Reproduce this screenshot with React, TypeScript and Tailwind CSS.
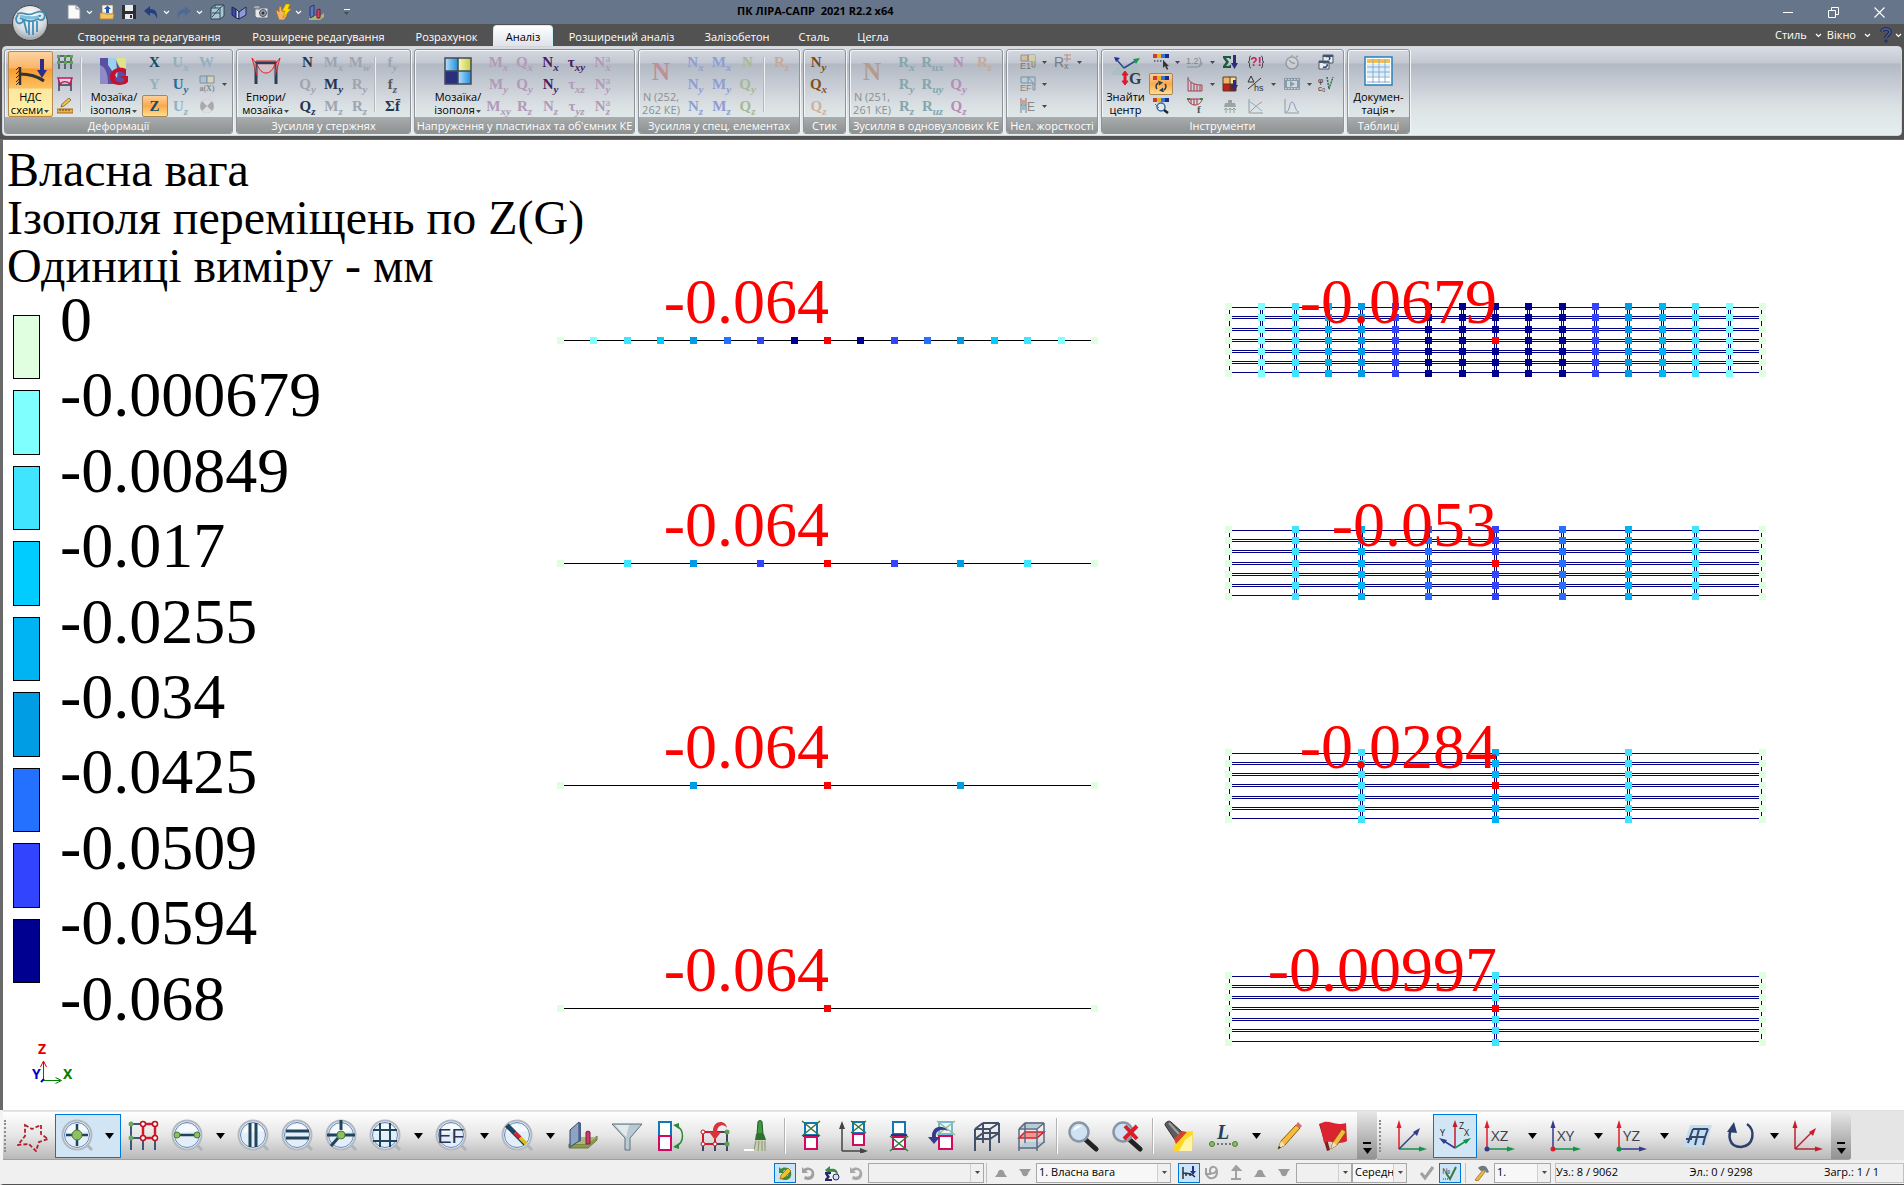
import React from 'react';

type Kids = { children?: React.ReactNode };

/* ---------- shared bits ---------- */

function Caret({ light }: { light?: boolean }) {
  return (
    <svg width="7" height="5" viewBox="0 0 7 5" className="inline-block shrink-0" aria-hidden="true">
      {light ? (
        <path d="M1 1l2.500 2.500L6 1" fill="none" stroke="#fff" strokeWidth="1.200" />
      ) : (
        <path d="M1 1h5L3.500 4z" fill="#4a4a4a" />
      )}
    </svg>
  );
}

function Svg({ size, box, children }: { size: number; box?: string } & Kids) {
  return (
    <svg width={size} height={size} viewBox={box ?? `0 0 ${size} ${size}`} className="shrink-0" aria-hidden="true">
      {children}
    </svg>
  );
}

/* ---------- title bar ---------- */

const quick: { name: string; icon: React.ReactNode; menu?: boolean }[] = [
  {
    name: 'Новий',
    menu: true,
    icon: (
      <Svg size={16}>
        <path d="M2 1h8l4 4v10H2z" fill="#fafafa" stroke="#8a8f98" />
        <path d="M10 1v4h4" fill="#dfe3ea" stroke="#8a8f98" />
      </Svg>
    ),
  },
  {
    name: 'Відкрити',
    icon: (
      <Svg size={16}>
        <path d="M3 1h11v9H3z" fill="#f4f4f4" stroke="#9a7a3a" strokeWidth=".7" />
        <path d="M8.500 1.500l3.500 3.500h-2v4H7V5H5z" fill="#2458a8" />
        <path d="M1 9h5l1 1h8l-1 5H1z" fill="#f3c463" stroke="#b98628" strokeWidth=".8" />
      </Svg>
    ),
  },
  {
    name: 'Зберегти',
    icon: (
      <Svg size={16}>
        <path d="M1 1h14v14H1z" fill="#2b2d33" />
        <path d="M4 1h8v6H4zM4 10h8v5H4z" fill="#e9ebef" />
        <path d="M9 11h2v3H9z" fill="#2b2d33" />
      </Svg>
    ),
  },
  {
    name: 'Скасувати',
    menu: true,
    icon: (
      <Svg size={16}>
        <path d="M1 7l6-5v3c5 0 8 3 7 10-1-4-3-6-7-6v3z" fill="#22407e" />
      </Svg>
    ),
  },
  {
    name: 'Повторити',
    menu: true,
    icon: (
      <Svg size={16}>
        <path d="M15 7L9 2v3C4 5 1 8 2 15c1-4 3-6 7-6v3z" fill="#4f6a92" />
      </Svg>
    ),
  },
  {
    name: 'Модель',
    icon: (
      <Svg size={16}>
        <path d="M2 4l4-3h9v11l-4 3H2z" fill="#a9c6d4" stroke="#2f4656" />
        <path d="M2 4h9v11M11 4l4-3M3 13l7-8M3 9h8M6 1v3" fill="none" stroke="#2f4656" />
      </Svg>
    ),
  },
  {
    name: 'Книга звітів',
    icon: (
      <Svg size={16}>
        <path d="M1 3l4 2v9l-4-3z" fill="#3949a8" stroke="#24265c" />
        <path d="M5 5l3 3v7l-3-1z" fill="#cfd6f2" stroke="#24265c" />
        <path d="M15 3L8 8v7l7-4z" fill="#8f9bd8" stroke="#24265c" />
      </Svg>
    ),
  },
  {
    name: 'Знімок',
    icon: (
      <Svg size={16}>
        <path d="M1 2h6v3H1zM2 4h13v10H4L2 12z" fill="#e3e6ea" stroke="#6b6f78" />
        <circle cx="10" cy="9" r="3.500" fill="#9aa1ac" stroke="#4c505a" />
        <circle cx="10" cy="9" r="1.500" fill="#2d3038" />
      </Svg>
    ),
  },
  {
    name: 'Розрахунок',
    menu: true,
    icon: (
      <Svg size={16}>
        <path d="M1 7l2-1 1 2V3l2-1 1 5 5 1v4l-3 4H4z" fill="#f0b46a" stroke="#a76a20" strokeWidth=".8" />
        <path d="M11 0h4l-2 5h3l-8 9 2-7H7z" fill="#ffe000" stroke="#c58a00" strokeWidth=".7" />
      </Svg>
    ),
  },
  {
    name: 'Конструкція',
    icon: (
      <Svg size={16}>
        <path d="M1 12h11l4-3v4l-4 3H1z" fill="#a9b873" />
        <path d="M2 3l4-2v11l-4 2z" fill="#5c79c2" stroke="#26386e" />
        <path d="M9 6l3-1v9H9z" fill="#d8436f" stroke="#7a1638" />
      </Svg>
    ),
  },
];

function TitleBar() {
  return (
    <header className="flex h-6 items-center bg-[#66758a]">
      <div className="flex w-[737px] items-center pl-[63px]">
        {quick.map((q) => (
          <button key={q.name} type="button" aria-label={q.name} className="flex h-6 items-center gap-1 px-[3px]">
            {q.icon}
            {q.menu && <Caret light />}
          </button>
        ))}
        <button type="button" aria-label="Налаштувати панель" className="ml-4 flex flex-col items-center gap-px">
          <span className="h-px w-[6px] bg-white" />
          <Caret />
        </button>
      </div>
      <h1 className="pb-[2px] text-[11px] font-bold whitespace-pre text-black">ПК ЛІРА-САПР  2021 R2.2 x64</h1>
      <div className="flex flex-1 justify-end pr-[2px]">
        <button type="button" aria-label="Згорнути" className="flex h-6 w-[46px] items-center justify-center">
          <span className="h-px w-[10px] bg-white" />
        </button>
        <button type="button" aria-label="Відновити" className="flex h-6 w-[45px] items-center justify-center">
          <Svg size={11}>
            <path d="M.5 3.500h7v7h-7zM3.500 3V.5h7v7H8" fill="none" stroke="#fff" />
          </Svg>
        </button>
        <button type="button" aria-label="Закрити" className="flex h-6 w-[46px] items-center justify-center">
          <Svg size={11}>
            <path d="M.5.5l10 10M10.500.5l-10 10" stroke="#fff" strokeWidth="1.100" />
          </Svg>
        </button>
      </div>
    </header>
  );
}

function Logo() {
  return (
    <button type="button" aria-label="Головне меню" className="absolute top-1 left-[11px] z-10">
      <svg width="38" height="38" viewBox="0 0 38 38" aria-hidden="true">
        <defs>
          <radialGradient id="orb" cx=".5" cy=".3" r=".75">
            <stop offset="0" stopColor="#ffffff" />
            <stop offset=".6" stopColor="#d6dade" />
            <stop offset="1" stopColor="#8b9198" />
          </radialGradient>
        </defs>
        <circle cx="19" cy="19" r="17.500" fill="url(#orb)" stroke="#444" />
        <g fill="none" stroke="#3f8fb6" strokeWidth="1.800">
          <path d="M6 10c6-3 10 2 15 0s9-4 12-1c2 3 0 8-4 7s-2-5 1-4" />
          <path d="M7 11c-4 4-1 10 3 8s1-6-1-4M13 17l3 12M18 16l0 15M22 16l0 15M26 17v11M10 14c5 4 12 4 17 1" />
        </g>
        <path d="M9 11c6 0 10 3 19 0v3c-7 3-12 1-19 0z" fill="#7fc0da" />
      </svg>
    </button>
  );
}

/* ---------- tabs ---------- */

const tabs = [
  { t: 'Створення та редагування', w: 'w-[176px]' },
  { t: 'Розширене редагування', w: 'w-[163px]' },
  { t: 'Розрахунок', w: 'w-[93px]' },
  { t: 'Аналіз', w: 'w-[60px]', on: true },
  { t: 'Розширений аналіз', w: 'w-[137px]' },
  { t: 'Залізобетон', w: 'w-[94px]' },
  { t: 'Сталь', w: 'w-[60px]' },
  { t: 'Цегла', w: 'w-[58px]' },
];

function TabRow() {
  return (
    <div className="flex h-[22px] items-stretch bg-[#525252] pr-[2px] pl-[61px] text-[11px]">
      <nav role="tablist" className="flex items-stretch">
        {tabs.map((t) => (
          <button
            key={t.t}
            type="button"
            role="tab"
            aria-selected={!!t.on}
            className={`${t.w} mt-px whitespace-nowrap pt-[3px] text-center ${
              t.on ? 'rounded-t-[4px] border border-b-0 border-[#c8f4f4] bg-gradient-to-b from-white to-[#dfe2ea] text-black' : 'text-white'
            }`}
          >
            {t.t}
          </button>
        ))}
      </nav>
      <div className="ml-auto flex items-center gap-[5px] text-white">
        <button type="button" className="flex items-center gap-2">
          Стиль <Caret light />
        </button>
        <button type="button" className="flex items-center gap-2">
          Вікно <Caret light />
        </button>
        <button type="button" aria-label="Довідка" className="ml-1 flex items-center gap-[3px]">
          <svg width="12" height="16" viewBox="0 0 12 16" aria-hidden="true">
            <path d="M2 5c0-4 8-4 8 0 0 3-4 3-4 6" fill="none" stroke="#1d2550" strokeWidth="3.500" />
            <path d="M2 5c0-4 8-4 8 0 0 3-4 3-4 6" fill="none" stroke="#4d64a6" strokeWidth="1.500" />
            <circle cx="6" cy="14" r="1.800" fill="#26346e" />
          </svg>
          <Caret light />
        </button>
      </div>
    </div>
  );
}

/* ---------- ribbon ---------- */

function Group({ title, w, children }: { title: string; w: string } & Kids) {
  return (
    <section
      aria-label={title}
      className={`${w} flex shrink-0 flex-col overflow-hidden rounded-[3px] border border-[#8f9498] shadow-[inset_1px_1px_0_#f2f4f6,1px_0_0_#f2f4f6]`}
    >
      <div className="flex h-[68px] items-start pt-px">{children}</div>
      <div className="h-4 bg-gradient-to-b from-[#a9adad] to-[#8d9191] pt-px text-center text-[11px] leading-[15px] whitespace-nowrap text-white">
        {title}
      </div>
    </section>
  );
}

function Big({ icon, a, b, w, menu, off, on }: { icon: React.ReactNode; a: string; b: string; w: string; menu?: boolean; off?: boolean; on?: boolean }) {
  return (
    <button
      type="button"
      disabled={off}
      aria-pressed={on}
      className={`${w} flex h-[66px] shrink-0 flex-col items-center text-[11px] leading-[13px] whitespace-nowrap ${off ? 'text-[#8b8f92]' : 'text-black'} ${
        on ? 'rounded-[2px] border border-[#b98a50] bg-[linear-gradient(#fbd3a0_0,#fbb56a_16px,#f99b2f_17px,#fdc160_36px,#fbe7a0_37px,#fff0a8_60px,#ffd968_64px)]' : 'py-px'
      }`}
    >
      <span className="flex h-[38px] w-full items-center justify-center">{icon}</span>
      <span>
        {a}
        <br />
        {b}
        {menu && <Caret />}
      </span>
    </button>
  );
}

function Col({ w, children }: { w?: string } & Kids) {
  return <div className={`${w ?? 'w-[26px]'} grid shrink-0 grid-rows-[22px_22px_22px]`}>{children}</div>;
}

function Cell({ name, off, on, children }: { name: string; off?: boolean; on?: boolean } & Kids) {
  return (
    <button
      type="button"
      aria-label={name}
      disabled={off}
      className={`flex h-[22px] items-center justify-center ${off ? 'opacity-50' : ''} ${
        on ? 'rounded-[2px] border border-[#a8865a] bg-gradient-to-b from-[#fbd09a] via-[#fba84a] to-[#ffe08a]' : ''
      }`}
    >
      {children}
    </button>
  );
}

function Sym({ t, s, p, c, on }: { t: string; s?: string; p?: string; c: string; on?: boolean }) {
  return (
    <button
      type="button"
      aria-label={`${t}${s ?? ''}${p ?? ''}`}
      className={`${c} relative flex h-[22px] items-center justify-center pr-px font-['Liberation_Serif',serif] text-[15px] leading-[20px] font-bold whitespace-nowrap ${
        on ? 'rounded-[2px] border border-[#a8865a] bg-gradient-to-b from-[#fbd09a] via-[#fba84a] to-[#ffe08a]' : ''
      }`}
    >
      <span>{t}</span>
      {(s || p) && (
        <span className="flex h-[20px] flex-col justify-end text-[11px] leading-[9px]">
          {p && <span className="font-normal">{p}</span>}
          {s && <span className="italic">{s}</span>}
        </span>
      )}
    </button>
  );
}

function Sep() {
  return <div className="mt-[6px] h-[55px] w-px shrink-0 bg-[#eef0f2] shadow-[-1px_0_0_#b4b8bd]" />;
}

function DropCol({ rows, w }: { rows: boolean[]; w?: string }) {
  return (
    <Col w={w ?? 'w-[9px]'}>
      {rows.map((r, i) =>
        r ? (
          <button key={i} type="button" aria-label="Відкрити список" className="flex h-[22px] items-center justify-center">
            <Caret />
          </button>
        ) : (
          <span key={i} />
        ),
      )}
    </Col>
  );
}

function Quad({ size }: { size: number }) {
  return (
    <Svg size={size} box="0 0 28 28">
      <defs>
        <linearGradient id="qa" x2="1">
          <stop offset="0" stopColor="#b8e0fa" />
          <stop offset="1" stopColor="#1c8fdc" />
        </linearGradient>
        <linearGradient id="qb" x2="1">
          <stop offset="0" stopColor="#f8fac0" />
          <stop offset="1" stopColor="#c4cc40" />
        </linearGradient>
      </defs>
      <path d="M1 1h13v13H1z" fill="url(#qa)" />
      <path d="M14 1h13v13H14z" fill="url(#qb)" />
      <path d="M1 14h13v13H1z" fill="#2a2f7c" />
      <path d="M14 14h13v13H14z" fill="url(#qa)" />
      <path d="M1 1h26v26H1zM14 1v26M1 14h26" fill="none" stroke="#444b55" strokeWidth="1.500" />
    </Svg>
  );
}

const rainbow = (
  <g>
    <path d="M0 0h4v4H0z" fill="#c8402a" />
    <path d="M4 0h4v4H4z" fill="#f0b020" />
    <path d="M8 0h4v4H8z" fill="#2a78d8" />
    <path d="M12 0h4v4h-4z" fill="#1c2c88" />
  </g>
);

const T = {
  navy: 'text-[#164a66]',
  teal: 'text-[#93b0bf]',
  dark: 'text-[#27344a]',
  gray: 'text-[#9ea4b0]',
  plum: 'text-[#4a1a62]',
  mauve: 'text-[#b19ab8]',
  blue: 'text-[#8f9dd2]',
  green: 'text-[#a9b894]',
  tan: 'text-[#c6a999]',
  sea: 'text-[#84a6ad]',
  pink: 'text-[#b68dba]',
};

function Ribbon() {
  return (
    <div className="bg-[#525252] px-[2px] pb-[3px]">
      <div className="flex h-[90px] gap-[3px] overflow-hidden rounded-[4px] border border-[#d4d6da] bg-[linear-gradient(#d9dce4_0,#c2c7d1_16px,#b2b9c4_17px,#c9ced6_40px,#dbe2e4_60px,#e6f0f0_88px)] p-px pt-[2px]">
        <Group title="Деформації" w="w-[229px]">
          <div className="w-[3px]" />
          <Big
            w="w-[45px]"
            on
            menu
            a="НДС"
            b="схеми"
            icon={
              <Svg size={32}>
                <path d="M5 12v18" stroke="#333" strokeWidth="2.500" />
                <path d="M5 19c10 0 17 2 24 7" fill="none" stroke="#333" strokeWidth="3" />
                <path d="M4 12l-3 3m3 1l-3 3m3 1l-3 3m3 1l-3 3m3 0l-3 3" stroke="#333" />
                <path d="M25 4h4v11h3l-5 8-5-8h3z" fill="#2c2c8c" />
              </Svg>
            }
          />
          <Col w="w-[24px]">
            <Cell name="Вузли схеми">
              <Svg size={16}>
                <path d="M1 2h14M1 8h14M2 2v13M8 2v13M14 2v13" fill="none" stroke="#34504a" strokeWidth="1.500" />
                <path d="M0 1h3v3H0zM7 1h3v3H7zM13 1h3v3h-3zM0 7h3v3H0zM7 7h3v3H7zM13 7h3v3h-3z" fill="#5aa846" />
              </Svg>
            </Cell>
            <Cell name="Деформована схема">
              <Svg size={16}>
                <path d="M2 2v13M14 2v13M2 9h12" fill="none" stroke="#3a3f55" strokeWidth="1.500" />
                <path d="M1 2h14l-2 6c-3-3-7-3-10 0z" fill="#f4d0de" stroke="#c2185b" strokeWidth="1.500" />
              </Svg>
            </Cell>
            <Cell name="Вимірювання">
              <Svg size={16}>
                <path d="M0 11h16v4H0z" fill="#e8b050" stroke="#a86a18" />
                <path d="M3 11v2m3-2v2m3-2v2m3-2v2" stroke="#6a4410" />
                <path d="M4 9l1-3 7-6 2 2-7 6z" fill="#f6c740" stroke="#7a5a20" strokeWidth=".8" />
              </Svg>
            </Cell>
          </Col>
          <div className="w-1" />
          <Sep />
          <div className="w-1" />
          <Big
            w="w-[56px]"
            menu
            a="Мозаїка/"
            b="ізополя"
            icon={
              <Svg size={30}>
                <path d="M1 2h26v26H1z" fill="#5a4fa0" />
                <path d="M9 2h9c-2 9 2 12 0 20L9 9z" fill="#9ad0f0" />
                <path d="M17 2h10v14c-6-2-9-8-10-14z" fill="#dfe48a" />
                <path d="M1 9c6 2 8 10 8 19H1z" fill="#8f8ac8" />
                <path d="M27 13v5h-2c-2-4-9-3-9 3s7 7 9 4v-3h-3v-2h7v6c-6 5-18 4-18-5s11-11 16-8z" fill="#c8102e" />
              </Svg>
            }
          />
          <Col>
            <Sym t="X" c={T.navy} />
            <Sym t="Y" c={T.teal} />
            <Sym t="Z" c={T.navy} on />
          </Col>
          <Col>
            <Sym t="U" s="x" c={T.teal} />
            <Sym t="U" s="y" c="text-[#1f6f98]" />
            <Sym t="U" s="z" c={T.teal} />
          </Col>
          <Col>
            <Sym t="W" c={T.teal} />
            <Cell name="a(X)" off>
              <Svg size={18}>
                <path d="M2 1h7v7H2z" fill="#88c4e8" stroke="#555" />
                <path d="M9 1h7v7H9z" fill="#e8e4a8" stroke="#555" />
                <text x="9" y="16" textAnchor="middle" fontSize="8" fontWeight="700" fontFamily="Liberation Serif" fill="#444">a(X)</text>
              </Svg>
            </Cell>
            <Cell name="Обертання" off>
              <Svg size={16}>
                <circle cx="8" cy="8" r="7" fill="#777" />
                <path d="M8 8L3 3a7 7 0 0 1 10 0zM8 8l-5 5a7 7 0 0 0 10 0z" fill="#ddd" />
              </Svg>
            </Cell>
          </Col>
          <DropCol rows={[false, true, false]} />
        </Group>

        <Group title="Зусилля у стержнях" w="w-[175px]">
          <Big
            w="w-[58px]"
            menu
            a="Епюри/"
            b="мозаїка"
            icon={
              <Svg size={30}>
                <path d="M5 28V7h20v21" fill="none" stroke="#2c3c54" strokeWidth="3" />
                <path d="M5 7L1 2l5 18M25 7l4-5-5 18M6 8c4 12 14 12 18 0M5 5l20 0" fill="#f3c3c3" fillOpacity=".5" stroke="#d22" />
              </Svg>
            }
          />
          <Col>
            <Sym t="N" c={T.dark} />
            <Sym t="Q" s="y" c={T.gray} />
            <Sym t="Q" s="z" c={T.dark} />
          </Col>
          <Col>
            <Sym t="M" s="x" c={T.gray} />
            <Sym t="M" s="y" c={T.dark} />
            <Sym t="M" s="z" c={T.gray} />
          </Col>
          <Col>
            <Sym t="M" s="w" c={T.gray} />
            <Sym t="R" s="y" c={T.gray} />
            <Sym t="R" s="z" c={T.gray} />
          </Col>
          <div className="w-[2px]" />
          <Sep />
          <div className="w-1" />
          <Col w="w-[26px]">
            <Sym t="f" s="y" c={T.gray} />
            <Sym t="f" s="z" c="text-[#55585f]" />
            <Sym t="Σf̄" c={T.dark} />
          </Col>
        </Group>

        <Group title="Напруження у пластинах та об'ємних КЕ" w="w-[221px]">
          <div className="w-[15px]" />
          <Big w="w-[56px]" menu a="Мозаїка/" b="ізополя" icon={<Quad size={28} />} />
          <Col>
            <Sym t="M" s="x" c={T.mauve} />
            <Sym t="M" s="y" c={T.mauve} />
            <Sym t="M" s="xy" c={T.mauve} />
          </Col>
          <Col>
            <Sym t="Q" s="x" c={T.mauve} />
            <Sym t="Q" s="y" c={T.mauve} />
            <Sym t="R" s="z" c={T.mauve} />
          </Col>
          <Col>
            <Sym t="N" s="x" c={T.plum} />
            <Sym t="N" s="y" c={T.plum} />
            <Sym t="N" s="z" c={T.mauve} />
          </Col>
          <Col>
            <Sym t="τ" s="xy" c={T.plum} />
            <Sym t="τ" s="xz" c={T.mauve} />
            <Sym t="τ" s="yz" c={T.mauve} />
          </Col>
          <Col>
            <Sym t="N" s="x" p="a" c={T.mauve} />
            <Sym t="N" s="y" p="a" c={T.mauve} />
            <Sym t="N" s="z" p="a" c={T.mauve} />
          </Col>
        </Group>

        <Group title="Зусилля у спец. елементах" w="w-[162px]">
          <Big
            w="w-[44px]"
            off
            a="N (252,"
            b="262 КЕ)"
            icon={<span className="font-['Liberation_Serif',serif] text-[25px] font-bold text-[#bf8f96]">N</span>}
          />
          <Col>
            <Sym t="N" s="x" c={T.blue} />
            <Sym t="N" s="y" c={T.blue} />
            <Sym t="N" s="z" c={T.blue} />
          </Col>
          <Col>
            <Sym t="M" s="x" c={T.blue} />
            <Sym t="M" s="y" c={T.blue} />
            <Sym t="M" s="z" c={T.blue} />
          </Col>
          <Col>
            <Sym t="N" c={T.green} />
            <Sym t="Q" s="y" c={T.green} />
            <Sym t="Q" s="z" c={T.green} />
          </Col>
          <div className="w-[3px]" />
          <Sep />
          <div className="w-1" />
          <Col>
            <Sym t="R" s="z" c={T.tan} />
          </Col>
        </Group>

        <Group title="Стик" w="w-[43px]">
          <div className="w-[2px]" />
          <Col>
            <Sym t="N" s="y" c="text-[#7a4a20]" />
            <Sym t="Q" s="x" c="text-[#85501e]" />
            <Sym t="Q" s="z" c="text-[#cfb09c]" />
          </Col>
        </Group>

        <Group title="Зусилля в одновузлових КЕ" w="w-[154px]">
          <Big
            w="w-[44px]"
            off
            a="N (251,"
            b="261 КЕ)"
            icon={<span className="font-['Liberation_Serif',serif] text-[25px] font-bold text-[#b49c8c]">N</span>}
          />
          <Col>
            <Sym t="R" s="x" c={T.sea} />
            <Sym t="R" s="y" c={T.sea} />
            <Sym t="R" s="z" c={T.sea} />
          </Col>
          <Col>
            <Sym t="R" s="ux" c={T.sea} />
            <Sym t="R" s="uy" c={T.sea} />
            <Sym t="R" s="uz" c={T.sea} />
          </Col>
          <Col>
            <Sym t="N" c={T.pink} />
            <Sym t="Q" s="y" c={T.pink} />
            <Sym t="Q" s="z" c={T.pink} />
          </Col>
          <Col>
            <Sym t="R" s="z" c={T.tan} />
          </Col>
        </Group>

        <Group title="Нел. жорсткості" w="w-[92px]">
          <div className="w-[9px]" />
          <Col w="w-[24px]">
            <Cell name="E1" off>
              <Svg size={18}>
                <path d="M2 2h7v6H2zM9 2h7v12h-3V8H9z" fill="#e0b060" stroke="#555" />
                <path d="M10 2h6v6h-6z" fill="#d8d478" />
                <text x="1" y="16" fontSize="9" fontFamily="Liberation Sans" fill="#333">E1</text>
              </Svg>
            </Cell>
            <Cell name="EF" off>
              <Svg size={18}>
                <path d="M2 2h14v13h-2V8H2zM9 2v6M9 2l7 8" fill="#a8d4ec" stroke="#456" />
                <text x="1" y="16" fontSize="9" fontFamily="Liberation Sans" fill="#333">EF</text>
              </Svg>
            </Cell>
            <Cell name="HE" off>
              <Svg size={18}>
                <path d="M2 1v15M7 1v15M2 8h5" stroke="#222" />
                <path d="M2 3h5v4H2z" fill="#e05a30" />
                <path d="M2 9h5v4H2z" fill="#3ca0c8" />
                <text x="8" y="14" fontSize="12" fontFamily="Liberation Sans" fill="#333">E</text>
              </Svg>
            </Cell>
          </Col>
          <DropCol rows={[true, true, true]} />
          <div className="w-[2px]" />
          <Col w="w-[24px]">
            <Cell name="Rx" off>
              <Svg size={20}>
                <text x="1" y="15" fontSize="14" fontFamily="Liberation Sans" fill="#333">R</text>
                <text x="11" y="17" fontSize="9" fontFamily="Liberation Sans" fill="#333">x</text>
                <path d="M14 2v8M11 3h7M11 7h7" stroke="#b24a2a" />
              </Svg>
            </Cell>
          </Col>
          <DropCol rows={[true, false, false]} />
        </Group>

        <Group title="Інструменти" w="w-[243px]">
          <Big
            w="w-[47px]"
            a="Знайти"
            b="центр"
            icon={
              <Svg size={32}>
                <path d="M1 20c2-8 14-12 28-8l1 8H2z" fill="#a8bcbc" opacity=".7" />
                <path d="M14 13L6 4M14 13L27 5" stroke="#2c4c8c" strokeWidth="1.500" />
                <path d="M4 2l6 1-4 4z" fill="#2a2f94" />
                <path d="M30 3l-7 1 3 5z" fill="#159a4a" />
                <path d="M15 16l3 4h-2v6h2l-3 4-3-4h2v-6h-2z" fill="#e0182c" stroke="#e0182c" />
                <text x="19" y="29" fontSize="16" fontWeight="700" fontFamily="Liberation Serif" fill="#333a44">G</text>
              </Svg>
            }
          />
          <Col w="w-[24px]">
            <Cell name="Шкала за вибором">
              <Svg size={16}>
                {rainbow}
                <path d="M1 7h10" stroke="#555" strokeDasharray="1.500 1.500" strokeWidth="1.500" />
                <path d="M10 6v8l2-2 2 4 1-1-1-3h2z" fill="#333" />
              </Svg>
            </Cell>
            <Cell name="Оновити шкалу" on>
              <Svg size={16}>
                {rainbow}
                <path d="M4 13a4 4 0 0 1 1-6M12 8a4 4 0 0 1-1 6" fill="none" stroke="#2c3c54" strokeWidth="1.500" />
                <path d="M5 4.500l5 2-4 3zM11 16.500l-5-2 4-3z" fill="#2c3c54" />
              </Svg>
            </Cell>
            <Cell name="Збільшити за шкалою">
              <Svg size={16}>
                {rainbow}
                <circle cx="8" cy="9" r="4" fill="#dceaf6" stroke="#3a6a9a" strokeWidth="1.500" />
                <path d="M11 12l4 3" stroke="#222" strokeWidth="2.500" />
                <path d="M2 6l4 4" stroke="#2a78d8" />
              </Svg>
            </Cell>
          </Col>
          <DropCol rows={[true, false, false]} />
          <Col>
            <Cell name="1.2)" off>
              <Svg size={18}>
                <text x="0" y="11" fontSize="9" fontFamily="Liberation Sans" fill="#444">1.2)</text>
                <path d="M1 14h10c3 0 5-2 5-5" fill="none" stroke="#666" />
              </Svg>
            </Cell>
            <Cell name="Гістограма">
              <Svg size={16}>
                <path d="M1 1v14h14M1 3c3 4 7 6 14 6v6M4 6v9M7 8v7M10 9v6M13 9v6" fill="none" stroke="#a84050" />
              </Svg>
            </Cell>
            <Cell name="f">
              <Svg size={16}>
                <path d="M1 1h14c-1 8-13 8-14 0zM4 1v5M7 1v6M10 1v5" fill="none" stroke="#a03040" />
                <path d="M0 0h3v2H0zM13 0h3v2h-3z" fill="#3a8a3a" />
                <text x="10" y="15" fontSize="11" fontWeight="700" fontFamily="Liberation Serif" fill="#555">f</text>
              </Svg>
            </Cell>
          </Col>
          <DropCol rows={[true, true, false]} />
          <Col>
            <Cell name="Сума">
              <Svg size={16}>
                <path d="M1 2h8v3H8L7 4H4l3 4-3 4h3l1-1h1v3H1v-2l3-4-3-4z" fill="#1f5a3a" />
                <path d="M11 1h3v8h2l-3.500 6L9 9h2z" fill="#2c2c7c" />
              </Svg>
            </Cell>
            <Cell name="Мозаїка зусиль">
              <Svg size={16}>
                <path d="M1 1h7v7H1z" fill="#f0b860" />
                <path d="M8 1h6v7H8z" fill="#f6e09a" />
                <path d="M1 8h7v7H1z" fill="#c02020" />
                <path d="M8 8h6v7H8z" fill="#7a2020" />
                <path d="M1 1h13v14H1zM8 1v14M1 8h13" fill="none" stroke="#5a3a20" />
                <path d="M11 4h3v5h2l-3.500 6L9 9h2z" fill="#2c2c7c" />
              </Svg>
            </Cell>
            <Cell name="Навантаження" off>
              <Svg size={16}>
                <path d="M6 2h4v3h3l1 4H2l1-4h3z" fill="#666" />
                <path d="M4 15v-5m-2 2l2-2 2 2M8 15v-5m-1 2l1-2 2 2M12 15v-5m-2 2l2-2 2 2" fill="none" stroke="#4a6a4a" />
              </Svg>
            </Cell>
          </Col>
          <Col>
            <Cell name="{?!}">
              <Svg size={18}>
                <text x="9" y="13" textAnchor="middle" fontSize="12" fontWeight="700" fontFamily="Liberation Sans" fill="#c8205a">?!</text>
                <path d="M4 3c-3 0 0 6-3 6 3 0 0 6 3 6M14 3c3 0 0 6 3 6-3 0 0 6-3 6" fill="none" stroke="#444" />
              </Svg>
            </Cell>
            <Cell name="Δ/hs">
              <Svg size={18}>
                <path d="M1 7l3-6 3 6zM1 14L14 3" fill="none" stroke="#333" />
                <text x="7" y="16" fontSize="9" fontFamily="Liberation Sans" fill="#333">hs</text>
              </Svg>
            </Cell>
            <Cell name="Графіки" off>
              <Svg size={16}>
                <path d="M1 1v14h14" fill="none" stroke="#555" />
                <path d="M2 14C6 10 10 6 14 4" fill="none" stroke="#d03030" />
                <path d="M2 4c4 2 8 6 12 9" fill="none" stroke="#308ac0" />
              </Svg>
            </Cell>
          </Col>
          <DropCol rows={[false, true, false]} />
          <Col w="w-[28px]">
            <Cell name="Секундомір" off>
              <Svg size={16}>
                <circle cx="8" cy="9" r="6" fill="#ddd" stroke="#777" strokeWidth="1.500" />
                <path d="M8 1v2M12 3l2-1M8 9L5 6M8 9h3" stroke="#777" strokeWidth="1.500" />
              </Svg>
            </Cell>
            <Cell name="Анімація" off>
              <Svg size={16}>
                <path d="M0 2h16v12H0z" fill="#4f6f82" />
                <path d="M3 5h10v6H3z" fill="#d8e4ea" />
                <path d="M6 5l5 3-5 3z" fill="#4f6f82" />
                <path d="M1 3.500h14M1 12.500h14" stroke="#d8e4ea" strokeDasharray="1.500 1.500" />
              </Svg>
            </Cell>
            <Cell name="Спектр" off>
              <Svg size={16}>
                <path d="M1 1v14h14" fill="none" stroke="#555" />
                <path d="M2 14C6 14 5 4 8 4s3 10 7 10" fill="none" stroke="#3a4aa0" />
              </Svg>
            </Cell>
          </Col>
          <DropCol rows={[false, true, false]} w="w-[6px]" />
          <Col w="w-[28px]">
            <Cell name="Вікна">
              <Svg size={16}>
                <path d="M5 1h10v8H5zM1 7h10v8H1z" fill="#e6ecf2" stroke="#4a5666" />
                <path d="M5 2h10M1 8h10" stroke="#4a5666" strokeWidth="2" />
                <path d="M8 3c3-2 5 1 3 3M5 13c3 1 5-1 4-3" fill="none" stroke="#2c4c7c" strokeWidth="1.500" />
              </Svg>
            </Cell>
            <Cell name="φ c">
              <Svg size={18}>
                <text x="1" y="8" fontSize="8" fontFamily="Liberation Sans" fill="#333">φ</text>
                <text x="1" y="16" fontSize="8" fontFamily="Liberation Sans" fill="#333">c₀</text>
                <path d="M10 2l2 12 4-12" fill="none" stroke="#2f6a4a" strokeDasharray="2 1" strokeWidth="1.500" />
              </Svg>
            </Cell>
          </Col>
        </Group>

        <Group title="Таблиці" w="w-[63px]">
          <Big
            w="w-[61px]"
            menu
            a="Докумен-"
            b="тація"
            icon={
              <Svg size={30}>
                <path d="M1 1h27v28H1z" fill="#fff" stroke="#2a80b8" strokeWidth="1.500" />
                <path d="M3 3h23v4H3z" fill="#f4bf50" />
                <path d="M3 8h23v12H3z" fill="#dcf0fc" />
                <path d="M9 3v24M15 3v24M21 3v24M3 11h23M3 16h23M3 21h23M3 26h23" stroke="#88acd0" />
              </Svg>
            }
          />
        </Group>
      </div>
    </div>
  );
}

/* ---------- model canvas ---------- */

const legend = [
  { c: 'bg-[#e0ffe0]', v: '0' },
  { c: 'bg-[#80ffff]', v: '-0.000679' },
  { c: 'bg-[#40e4ff]', v: '-0.00849' },
  { c: 'bg-[#00ccff]', v: '-0.017' },
  { c: 'bg-[#00b4f4]', v: '-0.0255' },
  { c: 'bg-[#009ce4]', v: '-0.034' },
  { c: 'bg-[#2470ff]', v: '-0.0425' },
  { c: 'bg-[#3344ff]', v: '-0.0509' },
  { c: 'bg-[#000090]', v: '-0.0594' },
];

const C = {
  z: '#e0ffe0',
  a: '#80ffff',
  b: '#40e4ff',
  c: '#00ccff',
  d: '#00b4f4',
  e: '#009ce4',
  f: '#2470ff',
  g: '#3344ff',
  h: '#000090',
  r: '#ff0000',
};

type Key = keyof typeof C;

/* colour keys from the support to mid-span; the other half mirrors them */
const beams: { y: number; half: string }[] = [
  { y: 200, half: 'zabcefghr' },
  { y: 423, half: 'zbegr' },
  { y: 645, half: 'zer' },
  { y: 868, half: 'zr' },
];

const plates: { y: number; half: string; label: string; rows: number[] }[] = [
  { y: 200, half: 'zabdeghhh', label: '-0.0679', rows: [-34, -23, -11, 0, 11, 22, 33] },
  { y: 423, half: 'zbdfg', label: '-0.053', rows: [-34, -23, -12, 0, 11, 22, 33] },
  { y: 645, half: 'zbd', label: '-0.0284', rows: [-33, -22, -11, 0, 12, 23, 34] },
  { y: 868, half: 'zb', label: '-0.00997', rows: [-33, -22, -11, 0, 11, 22, 34] },
];

const mirror = (s: string) => (s + s.slice(0, -1).split('').reverse().join('')).split('') as Key[];
const snap = (v: number) => Math.floor(v + 0.4);

function Node({ x, y, k }: { x: number; y: number; k: Key }) {
  return <rect x={snap(x) - 3} y={y - 3} width="7" height="7" fill={C[k]} />;
}

function Value({ x, y, t }: { x: number; y: number; t: string }) {
  return (
    <text x={x} y={y} textAnchor="end" fontSize="64" fontFamily="Liberation Serif" fill="#ff0000">
      {t}
    </text>
  );
}

function Beam({ y, half }: { y: number; half: string }) {
  const ks = mirror(half);
  const x0 = 557;
  const step = 534 / (ks.length - 1);
  return (
    <g>
      <path d={`M${x0} ${y + 0.5}h534`} stroke="#000" shapeRendering="crispEdges" />
      {ks.map((k, i) => (
        <Node key={i} x={x0 + i * step} y={y} k={k} />
      ))}
      <Value x={x0 + 269} y={y - 17} t="-0.064" />
    </g>
  );
}

function Plate({ y, half, label, rows }: { y: number; half: string; label: string; rows: number[] }) {
  const ks = mirror(half);
  const x0 = 1225;
  const n = ks.length - 1;
  const step = 534 / n;
  const ys = rows.map((d) => y + d);
  let d = '';
  ys.forEach((v, i) => {
    if (i > 0) d += `M${x0 + 1} ${v - 0.5}h532`;
    if (i < 6) d += `M${x0 + 1} ${v + 1.5}h532`;
  });
  ks.forEach((_, i) => {
    const x = snap(x0 + i * step);
    if (i > 0) d += `M${x - 0.5} ${ys[0]}V${ys[6]}`;
    if (i < n) d += `M${x + 1.5} ${ys[0]}V${ys[6]}`;
  });
  return (
    <g>
      <path d={d} stroke="#000080" shapeRendering="crispEdges" />
      {ks.map((k, i) => ys.map((v, j) => <Node key={`${i}-${j}`} x={x0 + i * step} y={v} k={i === n / 2 && j === 3 ? 'r' : k} />))}
      <Value x={x0 + 269} y={y - 17} t={label} />
    </g>
  );
}

function Canvas() {
  return (
    <main className="relative min-h-[971px] flex-1 overflow-hidden border-t border-l-[3px] border-[#6a6a6a] bg-white font-['Liberation_Serif',serif] text-black">
      <div className="px-1 pt-[6px] text-[48px] leading-[48px]">
        <p>Власна вага</p>
        <p>Ізополя переміщень по Z(G)</p>
        <p>Одиниці виміру - мм</p>
      </div>
      <div className="-mt-[2px] flex h-[754px] gap-5 pl-[10px]">
        <div className="flex h-[695px] w-[27px] flex-col gap-[11px] pt-[27px]">
          {legend.map((l) => (
            <div key={l.v} className={`${l.c} flex-1 border border-black`} />
          ))}
        </div>
        <ul className="flex flex-col text-[64px] leading-[64px]">
          {legend.map((l) => (
            <li key={l.v} className="flex-1">
              {l.v}
            </li>
          ))}
          <li className="flex-1">-0.068</li>
        </ul>
      </div>
      <svg className="absolute inset-0 h-full w-full" viewBox="0 0 1901 970" preserveAspectRatio="xMinYMin meet" role="img" aria-label="Ізополя переміщень">
        {beams.map((b) => (
          <Beam key={b.y} {...b} />
        ))}
        {plates.map((p) => (
          <Plate key={p.y} {...p} />
        ))}
        <g fontFamily="Noto Sans" fontSize="14" fontWeight="700">
          <text x="35" y="914" fill="#e00000">Z</text>
          <text x="29" y="939" fill="#0000c8">Y</text>
          <text x="60" y="939" fill="#008000">X</text>
          <path d="M40.500 940v-18m-3 5l3-6 3 6" fill="none" stroke="#e00000" />
          <path d="M40.500 940.500h17m-5-3l6 3-6 3" fill="none" stroke="#008000" />
          <path d="M38 942l3-3" stroke="#0000c8" strokeWidth="2" />
        </g>
      </svg>
    </main>
  );
}

/* ---------- bottom toolbar ---------- */

function Lens({ children }: Kids) {
  return (
    <Svg size={34} box="-1 0 34 34">
      <path d="M26 26l5 5" stroke="#aeb4bc" strokeWidth="3" />
      <circle cx="16" cy="16" r="14.500" fill="#f6fafd" stroke="#b4b8be" strokeWidth="2" />
      <circle cx="16" cy="16" r="12.500" fill="#e4eef8" stroke="#5c86bc" />
      <path d="M6 14a10 10 0 0 1 10-9c5 0 9 3 10 7z" fill="#fff" opacity=".7" />
      {children}
    </Svg>
  );
}

const ink = '#20445c';
const blue = '#1276b8';
const crim = '#d00a62';

function Box({ y, c, f }: { y: number; c: string; f?: string }) {
  return <rect x="11" y={y} width="12" height="12" fill={f ?? 'none'} stroke={c} strokeWidth="2" />;
}

type Tool = { name: string; icon: React.ReactNode; menu?: boolean; on?: boolean; sep?: boolean };

function Axes({ up, right, dot, label }: { up: string; right: string; dot: string; label: string }) {
  return (
    <Svg size={34}>
      <path d="M5 30V7" stroke={up} strokeWidth="1.500" />
      <path d="M5 1l2.500 8h-5z" fill={up} />
      <path d="M5 30h20" stroke={right} strokeWidth="1.500" />
      <path d="M33 30l-8 2.500v-5z" fill={right} />
      <circle cx="5" cy="30" r="2.500" fill={dot} />
      <text x="9" y="22" fontSize="15" fontFamily="Open Sans" fill="#3c3c4c">{label}</text>
    </Svg>
  );
}

const main1: Tool[] = [
  {
    name: 'Полігон',
    icon: (
      <Svg size={32}>
        <path d="M8 5l7 4 9-4v9l7 5-9 3-3 9-7-7-11 1 7-9z" fill="none" stroke="#b02030" strokeWidth="1.800" strokeDasharray="4 2" />
      </Svg>
    ),
  },
  {
    name: 'Вибір вузлів',
    menu: true,
    on: true,
    icon: (
      <Lens>
        <path d="M16 5v22M5 16h22" stroke={ink} strokeWidth="2.500" />
        <circle cx="16" cy="16" r="5" fill="#8cc060" stroke="#4a7a38" />
      </Lens>
    ),
  },
  {
    name: 'Вибір сітки',
    icon: (
      <Svg size={32}>
        <path d="M4 4v26M4 4h12M4 18h12M16 18v12M28 18v12" stroke="#3a5a7c" strokeWidth="2" />
        <path d="M16 4h12v14H16z" fill="none" stroke="#d81828" strokeWidth="2.500" />
        <g fill="#fff" stroke="#c01020" strokeWidth="1.500">
          <circle cx="16" cy="4" r="2.500" />
          <circle cx="28" cy="4" r="2.500" />
          <circle cx="16" cy="18" r="2.500" />
          <circle cx="28" cy="18" r="2.500" />
        </g>
        <circle cx="4" cy="4" r="2.500" fill="#6aa860" />
        <circle cx="4" cy="18" r="2.500" fill="#6aa860" />
      </Svg>
    ),
  },
  {
    name: 'Вибір елементів',
    menu: true,
    icon: (
      <Lens>
        <path d="M7 16h18" stroke={ink} strokeWidth="2.500" />
        <circle cx="6" cy="16" r="3" fill="#8cc060" stroke="#4a7a38" />
        <circle cx="26" cy="16" r="3" fill="#8cc060" stroke="#4a7a38" />
      </Lens>
    ),
  },
  { name: 'Вертикальні елементи', icon: <Lens><path d="M13 4v24M19 4v24" stroke={ink} strokeWidth="3" /></Lens> },
  { name: 'Горизонтальні елементи', icon: <Lens><path d="M5 12h23M5 19h23" stroke={ink} strokeWidth="3" /></Lens> },
  {
    name: 'Елементи у вузлі',
    icon: (
      <Lens>
        <path d="M16 1v10M2 16h10M20 16h10M13 19l-7 8" stroke={ink} strokeWidth="3" />
        <circle cx="16" cy="16" r="4" fill="#8cc060" stroke="#4a7a38" />
      </Lens>
    ),
  },
  { name: 'Вибір пластин', menu: true, icon: <Lens><path d="M11 4v24M21 4v24M4 11h24M4 22h24" stroke={ink} strokeWidth="2" /></Lens> },
  {
    name: 'EF',
    menu: true,
    icon: (
      <Lens>
        <text x="16" y="24" textAnchor="middle" fontSize="21" fontFamily="Liberation Sans" fill="#2c3454">EF</text>
      </Lens>
    ),
  },
  {
    name: 'Вибір за кольором',
    menu: true,
    icon: (
      <Lens>
        <path d="M6 6l8 8" stroke={ink} strokeWidth="4.500" />
        <path d="M14 14l5 5" stroke="#d82030" strokeWidth="4.500" />
        <path d="M19 19l6 6" stroke="#d8c020" strokeWidth="4.500" />
        <path d="M4.500 7.500l18.500 18.500" stroke={ink} strokeWidth="1.200" />
      </Lens>
    ),
  },
  {
    name: 'Фрагмент',
    icon: (
      <Svg size={32}>
        <path d="M2 24h18l10-8v4l-9 8H2z" fill="#8a9a50" stroke="#66783a" />
        <path d="M2 24l9-7h19l-10 7z" fill="#a9ba70" />
        <path d="M3 10l9-8v19l-9 6z" fill="#8fa3c4" stroke="#34466c" />
        <path d="M12 2l2 1v18l-2 1z" fill="#4a5f88" />
        <path d="M19 12l2-1 2 1v12h-4z" fill="#cc3a6c" stroke="#7a1c40" />
      </Svg>
    ),
  },
  {
    name: 'Фільтр',
    icon: (
      <Svg size={32}>
        <path d="M1 4h30L19 18v12h-5V18z" fill="#b9cad2" stroke="#5c7280" />
        <path d="M4 5h14l-3 12z" fill="#fff" opacity=".6" />
      </Svg>
    ),
  },
  {
    name: 'Інверсія',
    icon: (
      <Svg size={32}>
        <path d="M4 2h12v14H4z" fill="#fff" stroke={blue} strokeWidth="2" />
        <path d="M4 16h12v14H4z" fill="#fff" stroke={crim} strokeWidth="2" />
        <path d="M20 5c10 4 10 18 0 22" fill="none" stroke="#2a8a3a" strokeWidth="1.500" />
        <path d="M18 5l6-2v6zM18 27l6 2v-6z" fill="#2a8a3a" />
      </Svg>
    ),
  },
  {
    name: 'Повернути схему',
    icon: (
      <Svg size={32}>
        <path d="M4 12h24M4 24h24M4 12v19M16 22v9M28 12v19" stroke="#3a4660" strokeWidth="2" />
        <path d="M4 12h12v12H4z" fill="none" stroke="#d81828" strokeWidth="2" />
        <path d="M28 8C27-1 13 0 14 12h-4l6 8 6-8h-4c0-7 7-9 10-4z" fill="#d8343c" />
        <g fill="#fff" stroke="#c01020">
          <circle cx="4" cy="12" r="2" />
          <circle cx="4" cy="24" r="2" />
          <circle cx="16" cy="24" r="2" />
        </g>
        <circle cx="28" cy="12" r="2.500" fill="#5aa050" />
        <circle cx="28" cy="24" r="2.500" fill="#5aa050" />
      </Svg>
    ),
  },
  {
    name: 'Очистити',
    icon: (
      <Svg size={32}>
        <path d="M15 2c0-2 4-2 4 0l1 12h-6z" fill="#3c9a3c" stroke="#1f5a24" />
        <path d="M13 14h8l2 6H12z" fill="#2f7030" />
        <path d="M12 20h11v11H9z" fill="#c8d0b4" />
        <path d="M13 21l-2 9M16 21l-1 10M19 21v10M22 21v10" stroke="#8a947a" />
        <path d="M1 30h10" stroke="#fff" strokeWidth="2" />
      </Svg>
    ),
  },
  {
    name: 'Верх',
    sep: true,
    icon: (
      <Svg size={34}>
        <Box y={4} c={blue} f="#fff" />
        <path d="M9 17h16" stroke="#203a78" strokeWidth="2" />
        <Box y={18} c={crim} f="#fff" />
        <path d="M8 2l18 15M26 2L8 17" stroke="#2f7a3a" strokeWidth="1.500" />
      </Svg>
    ),
  },
  {
    name: 'Проєкція',
    icon: (
      <Svg size={34}>
        <path d="M4 32V8M4 32h20" stroke="#444" strokeWidth="1.500" />
        <path d="M4 2l3 8H1zM30 32l-8 3v-6z" fill="#444" />
        <path d="M15 3h11v11H15z" fill="#fff" stroke={blue} strokeWidth="2" />
        <path d="M15 15h11v11H15z" fill="#fff" stroke={crim} strokeWidth="2" />
        <path d="M13 2l15 12M28 2L13 14" stroke="#2f7a3a" strokeWidth="1.500" />
      </Svg>
    ),
  },
  {
    name: 'Низ',
    icon: (
      <Svg size={34}>
        <Box y={3} c={blue} f="#fff" />
        <path d="M9 16h16" stroke="#203a78" strokeWidth="2" />
        <Box y={18} c={crim} f="#fff" />
        <path d="M8 17l18 15M26 17L8 32" stroke="#2f7a3a" strokeWidth="1.500" />
      </Svg>
    ),
  },
  {
    name: 'Повернення',
    icon: (
      <Svg size={34}>
        <path d="M13 3h13v12H13z" fill="#eaf4fa" stroke="#7ab8d8" strokeWidth="2" />
        <path d="M13 17h13v13H13z" fill="#fff" stroke={crim} strokeWidth="2" />
        <path d="M11 2l18 14M29 2L11 16" stroke="#8abf90" strokeWidth="1.500" />
        <path d="M22 12C16 4 5 8 6 18H2l6 7 6-7h-4c-1-6 5-9 12-6z" fill="#343a8c" />
      </Svg>
    ),
  },
  {
    name: 'Просторова рама',
    icon: (
      <Svg size={32}>
        <path d="M4 9v22M19 9v22M12 3v20M28 3v20M4 9h15M12 3h16M4 9l8-6M19 9l9-6M4 19h15M12 13h16M4 19l8-6M19 19l9-6" fill="none" stroke="#43506a" strokeWidth="2" />
      </Svg>
    ),
  },
  {
    name: 'Перекриття',
    icon: (
      <Svg size={32}>
        <path d="M10 2h19l-7 6H4zM10 22h19l-7 6H4z" fill="#b8ccd8" />
        <path d="M10 12h19l-7 6H4z" fill="#f0968c" stroke="#d8202c" strokeWidth="1.500" />
        <path d="M4 9v22M22 9v22M10 3v20M29 3v20M4 9h18M10 3h19M4 28h18M4 9l6-6M22 9l7-6M22 28l7-6" fill="none" stroke="#5c6880" strokeWidth="1.500" />
      </Svg>
    ),
  },
  {
    name: 'Лупа',
    sep: true,
    icon: (
      <Svg size={32}>
        <path d="M19 20l10 9" stroke="#222" strokeWidth="5" strokeLinecap="round" />
        <circle cx="12" cy="12" r="9.500" fill="#cfe2f4" stroke="#8a96a6" strokeWidth="2.500" />
        <path d="M6 11a7 7 0 0 1 9-5z" fill="#fff" />
      </Svg>
    ),
  },
  {
    name: 'Скинути лупу',
    icon: (
      <Svg size={32}>
        <path d="M19 20l10 9" stroke="#222" strokeWidth="5" strokeLinecap="round" />
        <circle cx="12" cy="12" r="9.500" fill="#cfe2f4" stroke="#8a96a6" strokeWidth="2.500" />
        <path d="M14 6l12 13M26 6L13 19" stroke="#d8202c" strokeWidth="4" />
      </Svg>
    ),
  },
  {
    name: 'Підсвітити',
    sep: true,
    icon: (
      <Svg size={32}>
        <path d="M2 5c0-3 4-5 6-3l11 10-7 8z" fill="#5c5c60" stroke="#333" />
        <path d="M6 3l10 11" stroke="#a0a0a4" strokeWidth="2" />
        <path d="M21 12l9-1-1 20H11l1-10z" fill="#ffd820" />
        <path d="M19 11l5 1-11 12-2-5z" fill="#d8402c" />
        <path d="M22 20l7-5v16H16z" fill="#fff4a8" />
      </Svg>
    ),
  },
  {
    name: 'Довжина',
    menu: true,
    icon: (
      <Svg size={32}>
        <text x="16" y="19" textAnchor="middle" fontSize="20" fontStyle="italic" fontWeight="700" fontFamily="Liberation Serif" fill="#24405c">L</text>
        <path d="M6 24h20" stroke="#555" strokeWidth="1.500" strokeDasharray="2 2" />
        <circle cx="5" cy="24" r="2.500" fill="#8cc060" stroke="#4a7a38" />
        <circle cx="28" cy="24" r="2.500" fill="#8cc060" stroke="#4a7a38" />
      </Svg>
    ),
  },
  {
    name: 'Олівець',
    icon: (
      <Svg size={32}>
        <path d="M5 29l3-8L23 5l4 3-15 17z" fill="#f4bc3c" stroke="#8a5a1c" />
        <path d="M23 5l2-3 4 4-2 2z" fill="#d86a6a" />
        <path d="M5 29l3-8 4 4z" fill="#f4e0b8" />
        <path d="M5 29l1-3 2 1.500z" fill="#222" />
      </Svg>
    ),
  },
  {
    name: 'Прапорець',
    icon: (
      <Svg size={32}>
        <path d="M2 4l4-1 7 27-3 1z" fill="#7c2020" />
        <path d="M3 4c9-6 13 3 26-1l1 18c-10 5-15-2-23 2z" fill="#dc2430" />
        <path d="M14 29l2-7 9-13 4 3-9 13z" fill="#f4bc3c" stroke="#8a5a1c" />
        <path d="M14 29l2-7 4 3z" fill="#f4e0b8" />
      </Svg>
    ),
  },
];

const main2: Tool[] = [
  {
    name: 'Осі',
    icon: (
      <Svg size={34}>
        <path d="M5 30V7" stroke="#e01c2c" strokeWidth="1.500" />
        <path d="M5 1l2.500 8h-5z" fill="#e01c2c" />
        <path d="M5 30h20" stroke="#12924a" strokeWidth="1.500" />
        <path d="M33 30l-8 2.500v-5z" fill="#12924a" />
        <path d="M5 30L21 14" stroke="#343a8c" strokeWidth="1.500" />
        <path d="M26 9l-3 8-4-4z" fill="#343a8c" />
      </Svg>
    ),
  },
  {
    name: 'Ізометрія',
    on: true,
    icon: (
      <Svg size={34}>
        <path d="M17 29V6" stroke="#c01c2c" strokeWidth="1.500" />
        <path d="M17 1l2.500 7h-5z" fill="#c01c2c" />
        <path d="M17 29L6 22" stroke="#343a8c" strokeWidth="1.500" />
        <path d="M1 19l8 2-3 4z" fill="#343a8c" />
        <path d="M17 29l11-7" stroke="#12924a" strokeWidth="1.500" />
        <path d="M33 19l-8 2 3 4z" fill="#12924a" />
        <g fontSize="9" fontFamily="Open Sans" fill="#222">
          <text x="2" y="17">Y</text>
          <text x="21" y="10">Z</text>
          <text x="26" y="17">X</text>
        </g>
      </Svg>
    ),
  },
  { name: 'XZ', menu: true, icon: <Axes up="#e01c2c" right="#12924a" dot="#343a8c" label="XZ" /> },
  { name: 'XY', menu: true, icon: <Axes up="#343a8c" right="#12924a" dot="#e01c2c" label="XY" /> },
  { name: 'YZ', menu: true, icon: <Axes up="#e01c2c" right="#343a8c" dot="#12924a" label="YZ" /> },
  {
    name: 'Перспектива',
    icon: (
      <Svg size={32}>
        <path d="M9 5h22l-7 22H2z" fill="#c3dcee" />
        <path d="M12 9h15M9 17h15M27 9l-3 8M12 9l-3 8M7 23l2-6M14 25l4-16M22 25l2-8M5 19h6" fill="none" stroke="#34466c" strokeWidth="2" />
      </Svg>
    ),
  },
  {
    name: 'Обертання',
    menu: true,
    icon: (
      <Svg size={32}>
        <path d="M22 4c9 6 7 22-6 23C3 27 3 14 7 9" fill="none" stroke="#2c3e6c" strokeWidth="2.500" />
        <path d="M2 12L9 2l3 11z" fill="#2c3e6c" />
      </Svg>
    ),
  },
  {
    name: 'Локальні осі',
    icon: (
      <Svg size={34}>
        <path d="M5 30V7M5 30h20M5 30l16-16" stroke="#b82430" strokeWidth="1.500" />
        <path d="M5 1l2.500 8h-5zM33 30l-8 2.500v-5zM26 9l-3 8-4-4z" fill="#c81c2c" />
      </Svg>
    ),
  },
];

function BigCaret() {
  return (
    <svg width="9" height="6" viewBox="0 0 9 6" className="shrink-0" aria-hidden="true">
      <path d="M0 0h9L4.500 6z" fill="#000" />
    </svg>
  );
}

function Bar({ items, label, lead }: { items: Tool[]; label: string; lead: string }) {
  return (
    <div role="toolbar" aria-label={label} className="flex h-12 shrink-0 items-center overflow-hidden rounded-r-[3px] border-b border-[#a0a0a0] bg-gradient-to-b from-white via-[#e6e6e6] to-[#b9b9b9]">
      <div className={`${lead} h-8 w-0 border-l-2 border-dotted border-[#8c8c8c]`} />
      {items.map((t) => (
        <React.Fragment key={t.name}>
          {t.sep && <div className="mx-[3px] h-9 w-[2px] border-l border-[#b4b4b4] bg-white" />}
          <button
            type="button"
            aria-label={t.name}
            aria-pressed={t.on}
            className={`flex h-11 shrink-0 items-center ${t.menu ? 'w-[66px]' : 'w-11'} ${t.on ? 'border border-[#0078d7] bg-[#d2e5f5]' : ''}`}
          >
            <span className={`flex shrink-0 items-center justify-center ${t.on ? 'w-[42px]' : 'w-11'}`}>{t.icon}</span>
            {t.menu && (
              <span className="flex w-[22px] items-center justify-center">
                <BigCaret />
              </span>
            )}
          </button>
        </React.Fragment>
      ))}
      <button type="button" aria-label="Додаткові кнопки" className="ml-[2px] flex h-12 w-5 flex-col items-center justify-end gap-1 bg-gradient-to-b from-[#e6e6e6] to-[#909090] pb-[6px]">
        <span className="h-[2px] w-2 bg-black" />
        <BigCaret />
      </button>
    </div>
  );
}

function BottomToolbars() {
  return (
    <div className="flex border-t border-[#e0e0e0] border-l-[3px] border-l-[#f4f4f4] bg-[#e5e5e5] pt-px">
      <Bar items={main1} label="Вибір" lead="mr-[5px] ml-px" />
      <Bar items={main2} label="Проєкції" lead="mr-2 ml-[2px]" />
    </div>
  );
}

/* ---------- status bar ---------- */

function SBtn({ name, on, w, children }: { name: string; on?: boolean; w?: string } & Kids) {
  return (
    <button type="button" aria-label={name} aria-pressed={on} className={`${w ?? 'w-6'} flex h-5 shrink-0 items-center justify-center ${on ? 'border border-[#0078d7] bg-[#cce4f7]' : ''}`}>
      {children}
    </button>
  );
}

function Combo({ name, w, value, off }: { name: string; w: string; value: string; off?: boolean }) {
  return (
    <span className={`${w} relative flex h-5 shrink-0 items-center border border-[#a8a8a8] ${off ? 'bg-[#f0f0f0]' : 'bg-[#f7f7f7]'}`}>
      <select aria-label={name} disabled={off} defaultValue={value} className="h-full w-full appearance-none overflow-hidden pr-3 pl-[2px] text-[11px] text-black">
        <option>{value}</option>
      </select>
      <span className="pointer-events-none absolute top-0 right-0 flex h-full w-[13px] items-center justify-center border-l border-[#d0d0d0] bg-[#f0f0f0]">
        <Caret />
      </span>
    </span>
  );
}

const turn = (c: string) => <path d="M2 2v6h6L6 6c4-3 7 1 5 4-1 2-4 2-6 1l-1 3c4 2 9 1 10-3 2-6-5-11-10-7z" fill={c} />;
const dome = (
  <Svg size={14}>
    <path d="M1 11c1-2 3-3 3-5 1-3 5-3 6 0 0 2 2 3 3 5z" fill="#9a9a9a" />
  </Svg>
);
const drop = (
  <Svg size={14}>
    <path d="M1 3h12c-1 2-3 3-3 5-1 3-5 3-6 0 0-2-2-3-3-5z" fill="#9a9a9a" />
  </Svg>
);

function StatusBar() {
  return (
    <footer className="flex h-[25px] items-center border-b border-l-[3px] border-[#525252] border-l-[#f0f0f0] bg-[#f0f0f0] pt-px text-[11px] text-black">
      <div className="w-[771px] shrink" />
      <SBtn name="Редагування" on w="w-[22px]">
        <Svg size={16}>
          {turn('#3c8a3c')}
          <path d="M3 14l1-4 7-7 3 3-7 7z" fill="#f4c030" stroke="#a06a10" strokeWidth=".8" />
        </Svg>
      </SBtn>
      <SBtn name="Назад"><Svg size={16}>{turn('#a0a0a0')}</Svg></SBtn>
      <SBtn name="Сума">
        <Svg size={16}>
          <path d="M1 5l5-4v3c6-1 8 2 8 6-2-3-4-4-8-3v3z" fill="#3c8a3c" />
          <path d="M1 7h6v2H4l2 3-2 2h4v2H1v-2l2-2-2-3z" fill="#26266c" />
          <circle cx="12" cy="12" r="3" fill="#dde" stroke="#26266c" />
        </Svg>
      </SBtn>
      <SBtn name="Вперед"><Svg size={16}>{turn('#a8a8a8')}</Svg></SBtn>
      <Combo name="Етап" w="w-[116px]" value="" off />
      <div className="ml-[2px] h-5 w-px bg-[#c0c0c0]" />
      <SBtn name="Попереднє завантаження" w="w-[27px]">{dome}</SBtn>
      <SBtn name="Наступне завантаження" w="w-[22px]">{drop}</SBtn>
      <Combo name="Завантаження" w="w-[135px]" value="1. Власна вага" />
      <div className="w-[7px]" />
      <SBtn name="Деформована схема" on w="w-[22px]">
        <Svg size={16}>
          <path d="M2 2v12M2 8c5 0 9 1 12 4M5 8v3M9 8v3" fill="none" stroke="#234" strokeWidth="1.500" />
          <path d="M11 1h2v5h2l-3 4-3-4h2z" fill="#2c2c8c" />
        </Svg>
      </SBtn>
      <SBtn name="Форма"><Svg size={16}><path d="M2 8c3 9 11 5 11-1S7 0 6 5s5 4 7 0M2 3v6h5" fill="none" stroke="#a0a0a0" strokeWidth="2" /></Svg></SBtn>
      <SBtn name="Крок"><Svg size={16}><path d="M8 5v9M3 14h10M8 1l4 4H5z" fill="#a0a0a0" stroke="#a0a0a0" strokeWidth="2" /></Svg></SBtn>
      <SBtn name="Попередня форма">{dome}</SBtn>
      <SBtn name="Наступна форма">{drop}</SBtn>
      <Combo name="Номер форми" w="w-[56px]" value="" off />
      <Combo name="Шар" w="w-[55px]" value="Середній" />
      <div className="w-2" />
      <SBtn name="Застосувати"><Svg size={16}><path d="M2 8l4 5 8-11" fill="none" stroke="#a0a0a0" strokeWidth="3" /></Svg></SBtn>
      <SBtn name="Номери" on w="w-[22px]">
        <Svg size={16}>
          <text x="0" y="9" fontSize="8" fontFamily="Open Sans" fill="#234">№</text>
          <path d="M4 8l4 6 6-12" fill="none" stroke="#3c7a3c" strokeWidth="2" />
          <path d="M1 14h5" stroke="#234" strokeDasharray="1 1" />
        </Svg>
      </SBtn>
      <div className="mx-1 h-5 w-px bg-[#c0c0c0]" />
      <SBtn name="Конструювання">
        <Svg size={16}>
          <path d="M9 5l2 2-7 9-3-1z" fill="#f0b840" stroke="#a06a10" strokeWidth=".8" />
          <path d="M4 3c3-3 7-3 9 0l2 4-2 1-3-3-3 1z" fill="#707880" />
        </Svg>
      </SBtn>
      <Combo name="Варіант" w="w-[57px]" value="1." />
      <div className="ml-1 flex h-5 min-w-0 flex-1 items-center justify-between border border-[#c0c0c0] pr-6 whitespace-nowrap">
        <span>Уз.: 8 / 9062</span>
        <span>Эл.: 0 / 9298</span>
        <span>Загр.: 1 / 1</span>
      </div>
    </footer>
  );
}

export default function App() {
  return (
    <div className="relative flex min-h-screen flex-col overflow-hidden bg-[#525252] font-['Open_Sans','Noto_Sans',sans-serif]">
      <Logo />
      <TitleBar />
      <TabRow />
      <Ribbon />
      <Canvas />
      <BottomToolbars />
      <StatusBar />
    </div>
  );
}
